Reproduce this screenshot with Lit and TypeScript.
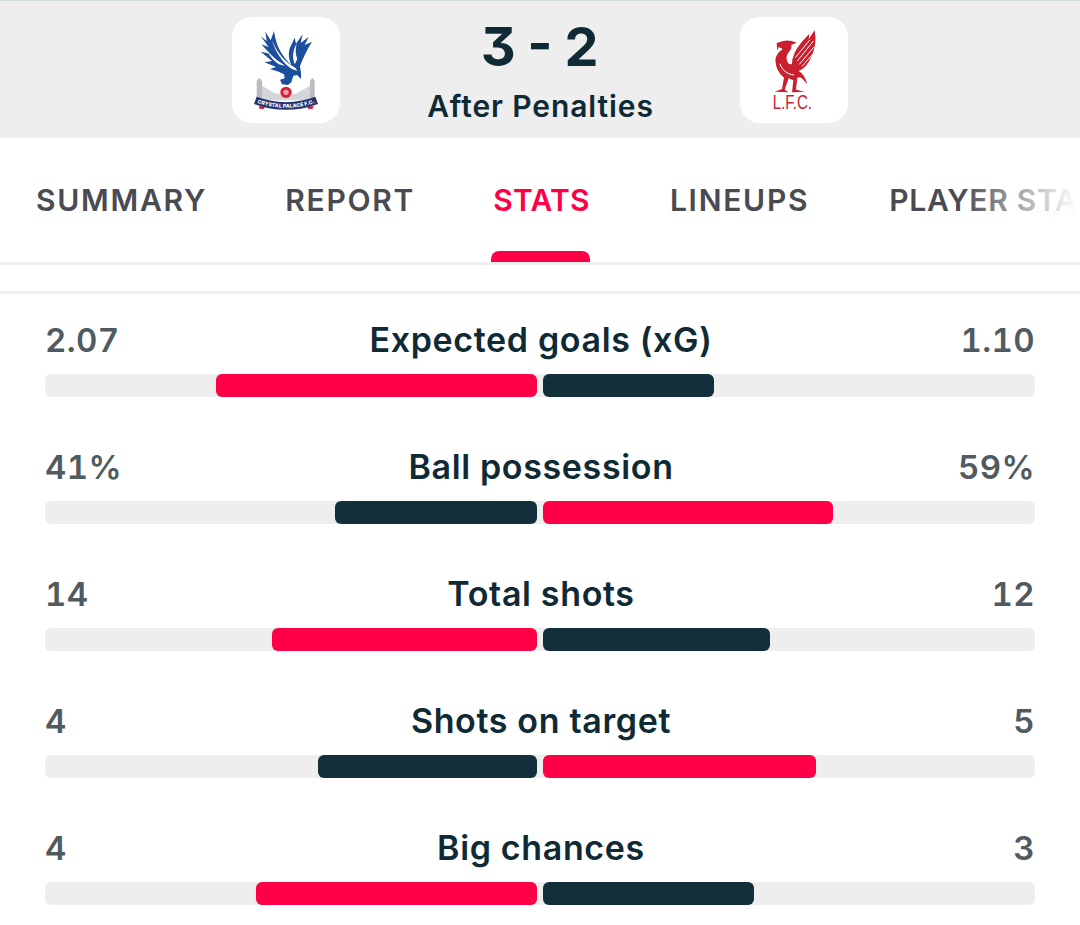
import { LitElement, html, css, svg, unsafeCSS } from "lit";
import { customElement } from "lit/decorators.js";

const RED = "#ff0046";
const DARK = "#122f3a";
const INK = "#0f2a35";
const rows = [
  { l: "2.07", label: "Expected goals (xG)", r: "1.10", lw: 321, rw: 171, lead: "l" },
  { l: "41%", label: "Ball possession", r: "59%", lw: 202, rw: 290, lead: "r" },
  { l: "14", label: "Total shots", r: "12", lw: 265, rw: 227, lead: "l" },
  { l: "4", label: "Shots on target", r: "5", lw: 219, rw: 273, lead: "r" },
  { l: "4", label: "Big chances", r: "3", lw: 281, rw: 211, lead: "l" },
];
const tabs = ["SUMMARY", "REPORT", "STATS", "LINEUPS", "PLAYER STATS"];

const palace = svg`<svg class="crest" viewBox="36 50 324 318">
  <defs><path id="ban" d="M106 300 Q198 334 290 300"/></defs>
  <g fill="#b9bcc2">
    <rect x="110" y="242" width="16" height="58"/><path d="M110 242l8-10 8 10z"/>
    <rect x="270" y="242" width="14" height="58"/><path d="M270 242l7-10 7 10z"/>
    <path d="M126 256 L168 280 L228 280 L270 256 V300 H126Z" fill="#d3d5d9"/>
  </g>
  <path fill="#1b4f9e" d="M122 108 L140 122 L136 94 L152 120 L162 92 C166 118 172 140 188 164 C198 178 206 188 214 194 C204 172 204 150 214 134 L224 112 L228 130 L248 102 L242 128 L266 110 L254 134 L276 124 C262 146 252 168 240 196 C240 204 246 222 242 236 L232 224 L220 226 L214 246 L204 254 L186 252 L180 238 L194 234 L192 222 L176 214 L150 206 L168 200 L134 186 L156 182 L122 154 L150 160 L124 132 L146 140Z"/>
  <path fill="#fff" d="M156 120 C166 156 190 190 216 206 L232 212 L226 202 C200 190 172 160 156 120Z M140 150 C160 172 178 186 196 196 L176 192 C162 182 150 170 140 150Z M230 130 C218 150 216 170 224 192 L232 176 C226 160 226 146 230 130Z"/>
  <circle cx="198" cy="276" r="17" fill="#d8203a"/>
  <circle cx="198" cy="276" r="8" fill="#f2a0a8"/>
  <path d="M116 318h20l-5 8h-12z M262 318h20l-5 8h-12z" fill="#d8203a"/>
  <path d="M106 300 Q198 334 290 300" fill="none" stroke="#25336f" stroke-width="23"/>
  <text font-family="Inter" font-size="15.5" font-weight="800" fill="#fff" dy="5.5"><textPath href="#ban" startOffset="50%" text-anchor="middle">CRYSTAL PALACE F.C.</textPath></text>
</svg>`;

const liver = svg`<svg class="crest" viewBox="30 50 324 318">
  <path fill="#c8202f" d="M140 128 L160 122 Q178 118 200 127 L184 134 Q186 146 176 156 Q166 170 172 184 Q178 196 186 190 Q186 160 215 125 L238 100 L236 116 L254 90 Q262 130 244 170 Q228 205 206 212 Q224 222 232 252 L220 238 Q212 228 202 232 L198 268 L224 274 L186 276 L190 240 L176 234 L164 268 L176 276 L134 274 L156 266 L162 232 Q138 214 136 180 Q136 162 158 146 L146 140 L142 152 Z"/>
  <g stroke="#fff" stroke-width="3" fill="none">
    <path d="M196 172 L240 118 M202 182 L250 122 M208 192 L252 140 M216 198 L246 164"/>
    <path d="M150 190 C154 208 172 222 192 224"/>
  </g>
  <text x="128" y="327" font-family="Liberation Sans" font-size="60" fill="#c8202f" textLength="118" lengthAdjust="spacingAndGlyphs">L.F.C.</text>
</svg>`;

@customElement("app-root")
export class AppRoot extends LitElement {
  static styles = css`
    :host { display: block; width: 1080px; height: 925px; background: #fff; font-family: Inter, "Noto Sans", sans-serif; overflow: hidden; }
    .head { background: #eeeeee; border-top: 1px solid #d5dde1; display: grid; grid-template-columns: 108px 400px 108px; justify-content: center; align-items: start; padding-top: 16px; height: 121px; }
    .badge { width: 108px; height: 106px; border-radius: 20px; background: #fff; }
    .crest { display: block; width: 108px; height: 106px; }
    .score { text-align: center; color: ${unsafeCSS(INK)}; }
    .nums { font-weight: 700; font-size: 54px; line-height: 60px; height: 60px; letter-spacing: 0; word-spacing: -8px; font-feature-settings: "cv09", "tnum"; }
    .sub { font-size: 30px; font-weight: 600; line-height: 36px; letter-spacing: 0.9px; margin-top: 11px; padding-left: 1px; }
    .tabs { position: relative; height: 124px; border-bottom: 3px solid #eeeeee; display: flex; gap: 78px; padding-left: 36px; overflow: hidden; }
    .tab { position: relative; font-size: 30px; font-weight: 600; letter-spacing: 1.75px; line-height: 36px; padding-top: 44px; color: #4a4a52; white-space: nowrap; }
    .tab:nth-child(5) { letter-spacing: 0.7px; margin-left: 2px; }
    .tab.on { color: ${unsafeCSS(RED)}; letter-spacing: 0.3px; margin-right: 2px; }
    .tab.on::after { content: ""; position: absolute; left: -2px; right: 0; top: 113px; height: 11px; background: ${unsafeCSS(RED)}; border-radius: 8px 8px 0 0; }
    .fade { position: absolute; right: 0; top: 0; bottom: 0; width: 120px; background: linear-gradient(to right, rgba(255,255,255,0), #fff 97%); }
    .list { margin-top: 26px; border-top: 3px solid #eeeeee; padding: 26px 45px 0; display: flex; flex-direction: column; gap: 50px; }
    .row { display: flex; flex-direction: column; gap: 14px; }
    .top { display: grid; grid-template-columns: 1fr auto 1fr; align-items: center; height: 40px; }
    .val { font-size: 33px; font-weight: 600; color: #4f5b60; letter-spacing: 0.4px; line-height: 40px; font-variant-numeric: tabular-nums; }
    .val.r { text-align: right; }
    .lab { font-size: 34px; font-weight: 600; color: ${unsafeCSS(INK)}; letter-spacing: 0.65px; line-height: 40px; padding-left: 2px; }
    .track { height: 23px; border-radius: 6px; background: #eeeeee; display: flex; justify-content: center; gap: 6px; }
    .half { width: 492px; display: flex; }
    .half.left { justify-content: flex-end; }
    .fill { height: 23px; border-radius: 6px; }
  `;
  render() {
    return html`
      <div class="head">
        <div class="badge">${palace}</div>
        <div class="score"><div class="nums">3 - 2</div><div class="sub">After Penalties</div></div>
        <div class="badge">${liver}</div>
      </div>
      <div class="tabs">
        ${tabs.map((t) => html`<div class="tab ${t === "STATS" ? "on" : ""}">${t}</div>`)}
        <div class="fade"></div>
      </div>
      <div class="list">
        ${rows.map((r) => html`
          <div class="row">
            <div class="top"><div class="val">${r.l}</div><div class="lab">${r.label}</div><div class="val r">${r.r}</div></div>
            <div class="track">
              <div class="half left"><div class="fill" style="width:${r.lw}px;background:${r.lead === "l" ? RED : DARK}"></div></div>
              <div class="half"><div class="fill" style="width:${r.rw}px;background:${r.lead === "r" ? RED : DARK}"></div></div>
            </div>
          </div>`)}
      </div>
    `;
  }
}
